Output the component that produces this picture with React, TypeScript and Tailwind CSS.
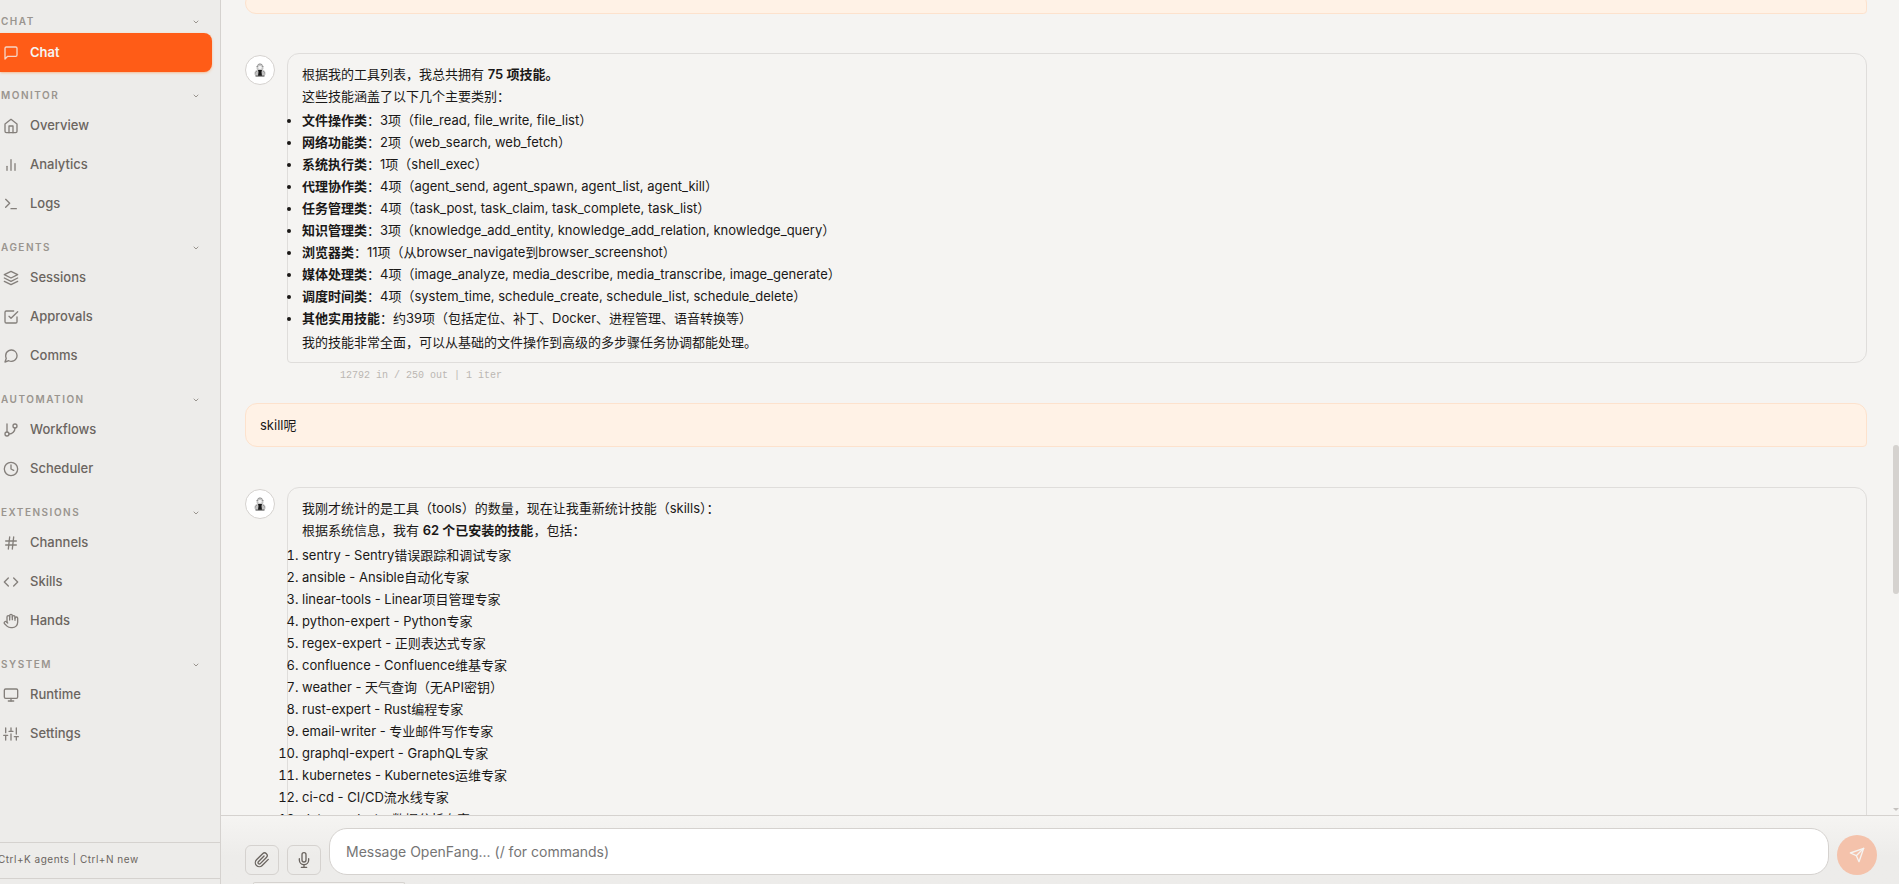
import { Hand } from "lucide-react";
import { useState, type ComponentType, type ReactNode } from "react";
import {
  FiBarChart2,
  FiCheckSquare,
  FiChevronDown,
  FiClock,
  FiCode,
  FiGitBranch,
  FiHash,
  FiHome,
  FiLayers,
  FiMessageCircle,
  FiMessageSquare,
  FiMic,
  FiMonitor,
  FiPaperclip,
  FiSend,
  FiSliders,
  FiTerminal,
} from "react-icons/fi";

interface NavItem {
  label: string;
  icon: ComponentType<{ className?: string }>;
}

interface NavGroup {
  title: string;
  items: NavItem[];
}

const groups: NavGroup[] = [
  { title: "Chat", items: [{ label: "Chat", icon: FiMessageSquare }] },
  {
    title: "Monitor",
    items: [
      { label: "Overview", icon: FiHome },
      { label: "Analytics", icon: FiBarChart2 },
      { label: "Logs", icon: FiTerminal },
    ],
  },
  {
    title: "Agents",
    items: [
      { label: "Sessions", icon: FiLayers },
      { label: "Approvals", icon: FiCheckSquare },
      { label: "Comms", icon: FiMessageCircle },
    ],
  },
  {
    title: "Automation",
    items: [
      { label: "Workflows", icon: FiGitBranch },
      { label: "Scheduler", icon: FiClock },
    ],
  },
  {
    title: "Extensions",
    items: [
      { label: "Channels", icon: FiHash },
      { label: "Skills", icon: FiCode },
      { label: "Hands", icon: Hand },
    ],
  },
  {
    title: "System",
    items: [
      { label: "Runtime", icon: FiMonitor },
      { label: "Settings", icon: FiSliders },
    ],
  },
];

const categories = [
  { name: "文件操作类", detail: "3项（file_read, file_write, file_list）" },
  { name: "网络功能类", detail: "2项（web_search, web_fetch）" },
  { name: "系统执行类", detail: "1项（shell_exec）" },
  { name: "代理协作类", detail: "4项（agent_send, agent_spawn, agent_list, agent_kill）" },
  { name: "任务管理类", detail: "4项（task_post, task_claim, task_complete, task_list）" },
  { name: "知识管理类", detail: "3项（knowledge_add_entity, knowledge_add_relation, knowledge_query）" },
  { name: "浏览器类", detail: "11项（从browser_navigate到browser_screenshot）" },
  { name: "媒体处理类", detail: "4项（image_analyze, media_describe, media_transcribe, image_generate）" },
  { name: "调度时间类", detail: "4项（system_time, schedule_create, schedule_list, schedule_delete）" },
  { name: "其他实用技能", detail: "约39项（包括定位、补丁、Docker、进程管理、语音转换等）" },
];

const skills = [
  "sentry - Sentry错误跟踪和调试专家",
  "ansible - Ansible自动化专家",
  "linear-tools - Linear项目管理专家",
  "python-expert - Python专家",
  "regex-expert - 正则表达式专家",
  "confluence - Confluence维基专家",
  "weather - 天气查询（无API密钥）",
  "rust-expert - Rust编程专家",
  "email-writer - 专业邮件写作专家",
  "graphql-expert - GraphQL专家",
  "kubernetes - Kubernetes运维专家",
  "ci-cd - CI/CD流水线专家",
  "data-analyst - 数据分析专家",
];

const Sidebar = () => {
  const [active, setActive] = useState("Chat");

  return (
    <aside className="flex w-[221px] shrink-0 flex-col border-r border-[#d5d2cf] bg-[#edecea]">
      <nav className="flex min-h-0 flex-1 flex-col gap-3 overflow-hidden pt-[10px] pr-2">
        {groups.map(group => (
          <div key={group.title} className="flex flex-col">
            <button className="flex h-[23px] items-center justify-between pr-3 pl-px text-[10px] font-semibold tracking-[1.5px] text-[#9a958f] uppercase">
              {group.title}
              <FiChevronDown className="size-2 stroke-3" />
            </button>
            {group.items.map(({ label, icon: Icon }) => (
              <a
                key={label}
                href="#"
                onClick={() => setActive(label)}
                className={
                  label === active
                    ? "flex h-[39px] items-center gap-[11px] rounded-r-lg bg-[#ff5c17] pl-[3px] text-[13px] font-semibold text-[#f5f4f2] shadow-sm shadow-orange-500/30"
                    : "flex h-[39px] items-center gap-[11px] rounded-r-lg pb-px pl-[3px] text-[13px] font-medium text-[#6b6560]"
                }
              >
                <Icon className="size-4 shrink-0 opacity-80" />
                {label}
              </a>
            ))}
          </div>
        ))}
      </nav>
      <div className="-ml-[2px] h-[36px] border-t border-[#d5d2cf] text-[10px] leading-8 tracking-wider text-[#6b6560]">
        Ctrl+K agents | Ctrl+N new
      </div>
      <div className="h-[6px] border-t border-[#d5d2cf]" />
    </aside>
  );
};

const Avatar = () => (
  <div className="mt-[2px] flex size-[30px] shrink-0 items-center justify-center rounded-full border border-[#d5d2cf] bg-white">
    <svg viewBox="0 0 16 16" className="size-4">
      <path d="M4.500 6c0-2.500 1.300-4.500 3.500-4.500s3.500 2 3.500 4.500c0 1-.5 1.500-.5 2 2 .5 2.800 2 2.500 4.500L12 14.500H4L2.500 12.500C2.200 10 3 8.500 5 8c0-.5-.5-1-.5-2z" fill="#c4c4c4" />
      <path d="M5 5c.3-1.800 1.500-3 3-3s2.700 1.200 3 3" fill="none" stroke="#777" strokeDasharray="1 1" />
      <circle cx="8" cy="5.500" r="1.800" fill="#f2f2f2" />
      <path d="M5 9l-1.500 1.500v2M11 9l1.500 1.500v2" fill="none" stroke="#888" strokeDasharray="1 1" />
      <path d="M6 8h4l-.5 2 .5 4H6l.5-4z" fill="#181818" />
      <path d="M3.500 14h9" stroke="#555" />
    </svg>
  </div>
);

const AgentMessage = ({ children, stats }: { children: ReactNode; stats?: string }) => (
  <div className="flex items-start gap-3">
    <Avatar />
    <div className="min-w-0 flex-1">
      <div className="rounded-xl rounded-bl-sm border border-[#dfdddb] px-[14px] py-[9px]">{children}</div>
      {stats && (
        <div className="pt-1 pl-[53px] font-['Liberation_Mono',monospace] text-[10px] leading-[18px] text-[#bbb7b3]">{stats}</div>
      )}
    </div>
  </div>
);

const UserMessage = ({ children }: { children?: ReactNode }) => (
  <div className="rounded-xl rounded-br-sm border border-[#fde2cd] bg-[#fff2e6] px-[14px] py-[10px]">{children}</div>
);

export default function App() {
  const [message, setMessage] = useState("");

  return (
    <div className="flex h-screen overflow-hidden bg-[#f5f4f2] font-['Inter','Noto_Sans_CJK_SC',sans-serif] text-[#1a1817]">
      <Sidebar />
      <main className="flex min-w-0 flex-1 flex-col">
        <div className="relative min-h-0 flex-1 overflow-hidden pr-8 pl-6 text-[13px] leading-[22px]">
          <div className="-mt-2 flex flex-col">
            <UserMessage />
            <div className="mt-[39px]">
              <AgentMessage stats="12792 in / 250 out | 1 iter">
                <p>
                  根据我的工具列表，我总共拥有 <strong className="font-semibold">75 项技能。</strong>
                </p>
                <p>这些技能涵盖了以下几个主要类别：</p>
                <ul className="list-disc py-[2px]">
                  {categories.map(({ name, detail }) => (
                    <li key={name}>
                      <strong className="font-semibold">{name}</strong>：{detail}
                    </li>
                  ))}
                </ul>
                <p>我的技能非常全面，可以从基础的文件操作到高级的多步骤任务协调都能处理。</p>
              </AgentMessage>
            </div>
            <div className="mt-[18px]">
              <UserMessage>skill呢</UserMessage>
            </div>
            <div className="mt-10">
              <AgentMessage>
                <p>我刚才统计的是工具（tools）的数量，现在让我重新统计技能（skills）：</p>
                <p>
                  根据系统信息，我有 <strong className="font-semibold">62 个已安装的技能</strong>，包括：
                </p>
                <ol className="list-decimal py-[3px]">
                  {skills.map(skill => (
                    <li key={skill}>{skill}</li>
                  ))}
                </ol>
              </AgentMessage>
            </div>
          </div>
          <div className="absolute top-[445px] right-0 h-[149px] w-[6px] rounded-full bg-[#d5d2cf]" />
          <svg viewBox="0 0 6 3" className="absolute right-0 bottom-1 h-[3px] w-[6px] fill-[#c5c2bf]">
            <path d="M0 0h6L3 3z" />
          </svg>
        </div>
        <form
          onSubmit={e => e.preventDefault()}
          className="flex flex-col gap-[7px] border-t border-[#d5d2cf] bg-linear-to-b from-[#f5f4f2] to-[#edecea] to-60% pt-3 pr-[22px] pl-6"
        >
          <div className="flex items-end gap-2">
            <button type="button" aria-label="Attach file" className="flex h-[30px] w-[34px] items-center justify-center rounded-md border border-[#d5d2cf] text-[#6b6560]">
              <FiPaperclip className="size-4" />
            </button>
            <button type="button" aria-label="Record voice" className="flex h-[30px] w-[34px] items-center justify-center rounded-md border border-[#d5d2cf] text-[#6b6560]">
              <FiMic className="size-4" />
            </button>
            <textarea
              rows={1}
              aria-label="Message"
              value={message}
              onChange={e => setMessage(e.target.value)}
              placeholder="Message OpenFang... (/ for commands)"
              className="h-[47px] min-w-0 flex-1 resize-none overflow-hidden rounded-[18px] border border-[#d5d2cf] bg-white px-4 py-3 text-sm leading-[22px] outline-none placeholder:text-[#757575]"
            />
            <button aria-label="Send" className="flex size-10 items-center justify-center rounded-full bg-[#f4c2ab] text-[#f5f4f2]">
              <FiSend className="size-4" />
            </button>
          </div>
          <div className="ml-2 h-[2px] w-[152px] rounded-t-lg border border-b-0 border-[#d5d2cf] bg-[#f5f4f2]" />
        </form>
      </main>
    </div>
  );
}
